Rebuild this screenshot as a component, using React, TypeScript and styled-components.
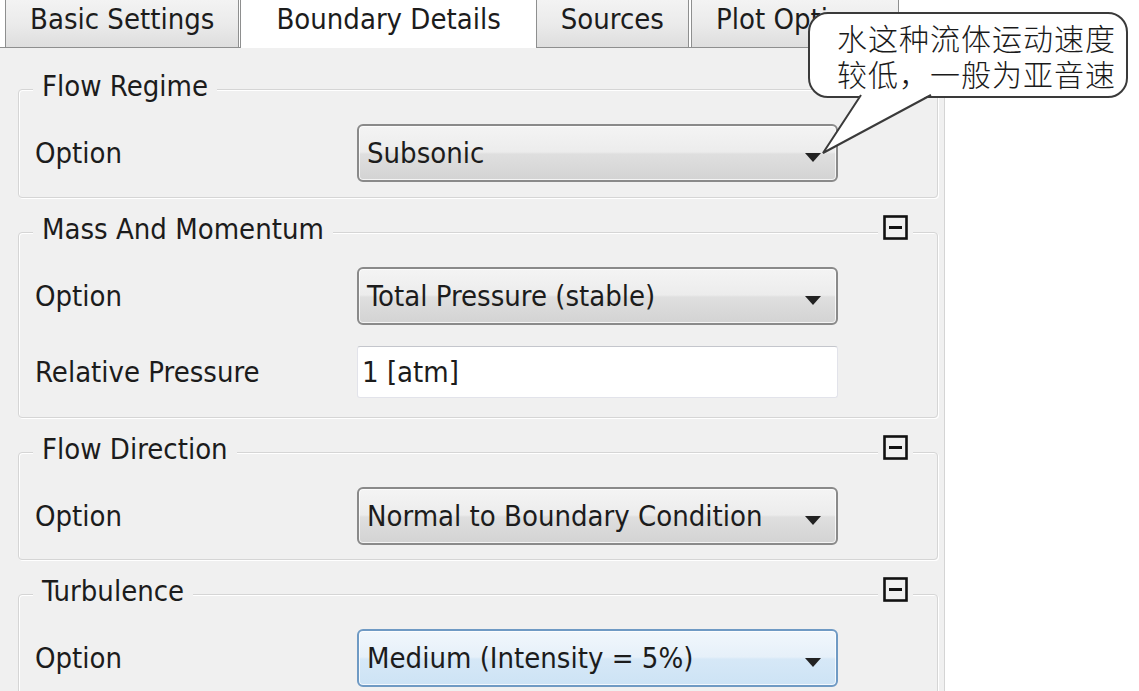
import styled, { createGlobalStyle } from 'styled-components'

const GlobalStyle = createGlobalStyle`
  html, body {
    margin: 0;
    padding: 0;
    background: #ffffff;
  }
  body {
    font-family: "DejaVu Sans Condensed", "DejaVu Sans", sans-serif;
    font-size: 29px;
    color: #1c1c1c;
  }
`

const Page = styled.div`
  position: relative;
  width: 1139px;
  height: 691px;
  overflow: hidden;
`

const Panel = styled.div`
  width: 945px;
  display: flex;
  flex-direction: column;
`

const TabBar = styled.div`
  display: flex;
  height: 48px;
  padding-left: 5px;
  border-bottom: 1px solid #8e8f8f;
  box-sizing: border-box;
  position: relative;
`

const Tab = styled.div<{ $active?: boolean }>`
  height: ${({ $active }) => ($active ? '48px' : '47px')};
  box-sizing: border-box;
  padding: 4px ${({ $active }) => ($active ? '35px' : '24px')} 0;
  line-height: 30px;
  white-space: nowrap;
  border-left: 1px solid #8e8f8f;
  border-right: 1px solid #8e8f8f;
  margin-left: ${({ $active }) => ($active ? '-1px' : '0')};
  margin-right: ${({ $active }) => ($active ? '-1px' : '2px')};
  background: ${({ $active }) =>
    $active ? '#ffffff' : 'linear-gradient(#f3f3f3 0%, #ebebeb 50%, #dedede 100%)'};
  position: relative;
  z-index: ${({ $active }) => ($active ? 1 : 0)};
`

const Body = styled.div`
  background: #f0f0f0;
  border-right: 1px solid #d4d4d4;
  padding: 22px 6px 0 18px;
  display: flex;
  flex-direction: column;
  gap: 15px;
  height: 643px;
  box-sizing: border-box;
`

const Group = styled.section`
  border: 1px solid #d5d5d5;
  border-radius: 4px;
  box-shadow: inset 1px 1px 0 #ffffff, 1px 1px 0 #ffffff;
  margin-top: 19px;
  flex-shrink: 0;
`

const GroupHeader = styled.div`
  display: flex;
  justify-content: space-between;
  align-items: flex-start;
  height: 38px;
  margin-top: -19px;
`

const GroupTitle = styled.div`
  margin-left: 14px;
  padding: 0 9px 8px;
  line-height: 30px;
  background: #f0f0f0;
`

const Toggle = styled.div`
  margin: 1px 24px 0 0;
  padding: 0 5px;
  background: #f0f0f0;
  display: flex;
`

const Rows = styled.div<{ $bottom: number }>`
  display: grid;
  grid-template-columns: 322px 481px;
  row-gap: 21px;
  align-items: center;
  padding: 15px 0 ${({ $bottom }) => $bottom}px 16px;
`

const Label = styled.div`
  line-height: 30px;
`

const Select = styled.div<{ $hover?: boolean }>`
  height: 58px;
  box-sizing: border-box;
  border: 2px solid ${({ $hover }) => ($hover ? '#6f9ac4' : '#8a8a8a')};
  border-radius: 6px;
  box-shadow: inset 0 0 0 1px rgba(255, 255, 255, 0.75);
  background: ${({ $hover }) =>
    $hover
      ? 'linear-gradient(#f1f7fc 0%, #e6f0f9 48%, #d6e8f7 52%, #cde3f5 100%)'
      : 'linear-gradient(#f4f4f4 0%, #ececec 48%, #dfdfdf 52%, #d3d3d3 100%)'};
  display: flex;
  align-items: center;
  justify-content: space-between;
  padding: 0 15px 0 8px;
  line-height: 30px;
  white-space: nowrap;
`

const Arrow = styled.svg`
  margin-top: 8px;
  flex-shrink: 0;
`

const Input = styled.div`
  height: 52px;
  box-sizing: border-box;
  background: #ffffff;
  border: 1px solid #e2e3ea;
  border-top-color: #c4c6cc;
  border-radius: 3px;
  display: flex;
  align-items: center;
  padding: 0 4px;
  line-height: 30px;
`

const Bubble = styled.div`
  position: absolute;
  left: 808px;
  top: 12px;
  width: 320px;
  height: 86px;
  box-sizing: border-box;
  background: #ffffff;
  border: 2px solid #3a3a3a;
  border-radius: 20px;
  font-family: "Noto Sans CJK SC", sans-serif;
  font-weight: 300;
  font-size: 30px;
  letter-spacing: 1px;
  line-height: 36px;
  color: #1a1a1a;
  padding: 5px 0 0 27px;
  white-space: nowrap;
  z-index: 5;
`

const Tail = styled.svg`
  position: absolute;
  left: 815px;
  top: 94px;
  z-index: 6;
`

function DropArrow() {
  return (
    <Arrow width="16" height="9" viewBox="0 0 16 9">
      <polygon points="0,0 16,0 8,9" fill="#222" />
    </Arrow>
  )
}

function CollapseIcon() {
  return (
    <svg width="25" height="25" viewBox="0 0 25 25">
      <rect x="1.5" y="1.5" width="22" height="22" fill="none" stroke="#111" strokeWidth="2.6" />
      <rect x="6" y="11" width="13" height="3" fill="#111" />
    </svg>
  )
}

type Field =
  | { kind: 'select'; label: string; value: string; hover?: boolean }
  | { kind: 'input'; label: string; value: string }

type GroupDef = {
  title: string
  collapsible: boolean
  bottom: number
  fields: Field[]
}

const groups: GroupDef[] = [
  {
    title: 'Flow Regime',
    collapsible: false,
    bottom: 15,
    fields: [{ kind: 'select', label: 'Option', value: 'Subsonic' }],
  },
  {
    title: 'Mass And Momentum',
    collapsible: true,
    bottom: 19,
    fields: [
      { kind: 'select', label: 'Option', value: 'Total Pressure (stable)' },
      { kind: 'input', label: 'Relative Pressure', value: '1 [atm]' },
    ],
  },
  {
    title: 'Flow Direction',
    collapsible: true,
    bottom: 14,
    fields: [{ kind: 'select', label: 'Option', value: 'Normal to Boundary Condition' }],
  },
  {
    title: 'Turbulence',
    collapsible: true,
    bottom: 14,
    fields: [
      { kind: 'select', label: 'Option', value: 'Medium (Intensity = 5%)', hover: true },
    ],
  },
]

const tabs = ['Basic Settings', 'Boundary Details', 'Sources', 'Plot Options']

export default function App() {
  return (
    <Page>
      <GlobalStyle />
      <Panel>
        <TabBar>
          {tabs.map((t) => (
            <Tab key={t} $active={t === 'Boundary Details'}>
              {t}
            </Tab>
          ))}
        </TabBar>
        <Body>
          {groups.map((g) => (
            <Group key={g.title}>
              <GroupHeader>
                <GroupTitle>{g.title}</GroupTitle>
                {g.collapsible ? (
                  <Toggle>
                    <CollapseIcon />
                  </Toggle>
                ) : null}
              </GroupHeader>
              <Rows $bottom={g.bottom}>
                {g.fields.flatMap((f, i) => [
                  <Label key={`l-${i}`}>{f.label}</Label>,
                  f.kind === 'select' ? (
                    <Select key={`c-${i}`} $hover={f.hover}>
                      <span>{f.value}</span>
                      <DropArrow />
                    </Select>
                  ) : (
                    <Input key={`c-${i}`}>{f.value}</Input>
                  ),
                ])}
              </Rows>
            </Group>
          ))}
        </Body>
      </Panel>
      <Bubble>
        水这种流体运动速度
        <br />
        较低，一般为亚音速
      </Bubble>
      <Tail width="125" height="62" viewBox="0 0 125 62">
        <polygon points="46,0 8,59 116,0" fill="#ffffff" />
        <polyline points="46,1 8,59 116,1" fill="none" stroke="#3a3a3a" strokeWidth="2" strokeLinejoin="miter" />
      </Tail>
    </Page>
  )
}
